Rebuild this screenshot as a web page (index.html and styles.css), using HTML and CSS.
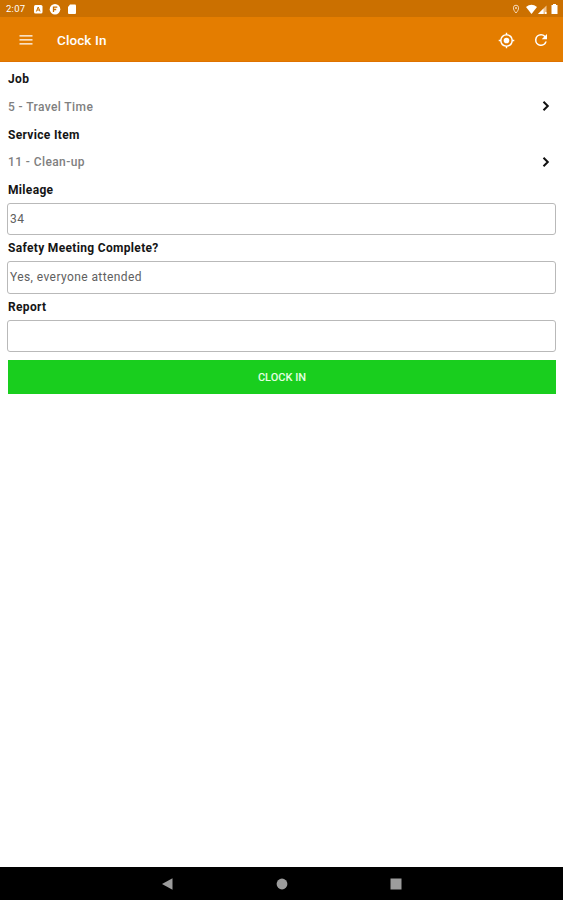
FILE: index.html
```html
<!DOCTYPE html>
<html lang="en">
<head>
<meta charset="utf-8">
<title>Clock In</title>
<link rel="stylesheet" href="styles.css">
</head>
<body>
<div class="status">
  <span class="time">2:07</span>
  <svg class="notices" width="45" height="12" viewBox="0 0 45 12">
    <rect x="1" y="2" width="8.5" height="8.5" rx="1.5" fill="#fff"/>
    <path d="M3.4 8.5 5.2 4l1.9 4.5M4 7h2.5" fill="none" stroke="#cb7000"/>
    <circle cx="22" cy="6.2" r="5.3" fill="#fff"/>
    <path d="M20.5 9V4.2h3.8M20.5 6.5h2.7" fill="none" stroke="#cb7000" stroke-width="1.3"/>
    <path d="M38 1.5h5q1 0 1 1V10q0 1-1 1h-6q-1 0-1-1V4z" fill="#fff" transform="translate(-1 0)"/>
  </svg>
  <svg class="signals" width="49" height="12" viewBox="0 0 49 12">
    <path d="M6 10C4.200 8.100 3.400 6.300 3.400 4.800a2.600 2.600 0 0 1 5.200 0c0 1.500-.8 3.300-2.600 5.200z" fill="none" stroke="#f6d9b8"/>
    <circle cx="6" cy="4.900" r="1" fill="#f6d9b8"/>
    <path d="M16 4Q21.500-.5 27 4L21.500 11z" fill="#fff"/>
    <path d="M28 11 36.500 2.500V11z" fill="#f0c28c"/>
    <path d="M28 11l5.500-5.500V11zM35 9h1.500v2H35z" fill="#fff"/>
    <path d="M43 1h3v1h1.500v9h-6V2H43z" fill="#fff"/>
  </svg>
</div>
<header class="bar">
  <svg class="menu" width="14" height="12" viewBox="0 0 14 12"><path d="M.5 1.900h13M.5 5.900h13M.5 9.900h13" stroke="#fff" stroke-width="1.400"/></svg>
  <h1>Clock In</h1>
  <svg class="locate" width="17" height="17" viewBox="0 0 24 24" fill="#fff"><path d="M12 8a4 4 0 1 0 0 8 4 4 0 0 0 0-8zm8.940 3A8.990 8.990 0 0 0 13 3.060V1h-2v2.060A8.990 8.990 0 0 0 3.060 11H1v2h2.060A8.990 8.990 0 0 0 11 20.940V23h2v-2.060A8.990 8.990 0 0 0 20.940 13H23v-2h-2.060zM12 19a7 7 0 1 1 0-14 7 7 0 0 1 0 14z"/></svg>
  <svg class="refresh" width="18" height="18" viewBox="0 0 24 24" fill="#fff"><path d="M17.650 6.350A7.960 7.960 0 0 0 12 4a8 8 0 1 0 7.730 10h-2.080A6 6 0 1 1 12 6c1.660 0 3.140.69 4.220 1.780L13 11h7V4z"/></svg>
</header>
<main>
  <div class="label job">Job</div>
  <div class="pick"><span>5 - Travel Time</span><svg width="8" height="12" viewBox="0 0 8 12"><path d="m1.500 1.700 4.300 4.300-4.300 4.300" fill="none" stroke="#111" stroke-width="2"/></svg></div>
  <div class="label service">Service Item</div>
  <div class="pick"><span>11 - Clean-up</span><svg width="8" height="12" viewBox="0 0 8 12"><path d="m1.500 1.700 4.300 4.300-4.300 4.300" fill="none" stroke="#111" stroke-width="2"/></svg></div>
  <div class="label mileage">Mileage</div>
  <div class="field">34</div>
  <div class="label">Safety Meeting Complete?</div>
  <div class="field">Yes, everyone attended</div>
  <div class="label">Report</div>
  <div class="field"></div>
  <div class="button">CLOCK IN</div>
</main>
<nav>
  <svg width="12" height="12" viewBox="0 0 12 12"><path d="M0 6 10.500.300v11.400z" fill="#9c9c9c"/></svg>
  <svg width="12" height="12" viewBox="0 0 12 12"><circle cx="6" cy="6" r="5.400" fill="#9c9c9c"/></svg>
  <svg width="12" height="12" viewBox="0 0 12 12"><path d="M.5.5h11v11H.5z" fill="#9c9c9c"/></svg>
</nav>
</body>
</html>
```
FILE: styles.css
```css
* { box-sizing: border-box; }
body {
  margin: 0;
  height: 900px;
  display: flex;
  flex-direction: column;
  background: #fff;
  font-family: Roboto, "Liberation Sans", sans-serif;
  font-size: 12px;
}
svg { display: block; flex: none; }
.status {
  height: 17px;
  display: flex;
  align-items: center;
  padding: 0 4px 0 6px;
  background: #cb7000;
  color: #fff;
}
.time { width: 27px; font-size: 9.5px; letter-spacing: .25px; }
.signals { margin-left: auto; }
.bar {
  height: 45px;
  display: flex;
  align-items: center;
  padding: 2px 13px 0 19px;
  background: #e47d00;
  border-bottom: 1px solid #df7200;
  color: #fff;
}
h1 {
  margin: 0 auto 0 24px;
  font-size: 13.5px;
  font-weight: 500;
  letter-spacing: .1px;
}
.locate { margin-right: 17px; }
main { flex: 1; padding: 3px 7px 0; }
.label {
  height: 26px;
  line-height: 27px;
  padding-left: 1px;
  font-weight: 700;
  letter-spacing: .33px;
  color: #151515;
}
.job { height: 28px; line-height: 29px; }
.service { height: 28px; line-height: 29px; }
.mileage { height: 27px; line-height: 29px; }
.pick {
  height: 27.5px;
  display: flex;
  align-items: center;
  justify-content: space-between;
  padding: 0 6px 0 1px;
  font-weight: 500;
  letter-spacing: .4px;
  color: #808080;
}
.pick svg { margin-bottom: 1px; }
.field {
  height: 32.3px;
  line-height: 31px;
  border: 1px solid #b9b9b9;
  border-radius: 3px;
  padding-left: 2px;
  letter-spacing: .41px;
  color: #606060;
}
.button {
  height: 34px;
  line-height: 35px;
  margin: 8.5px 0 0 1px;
  background: #19ce1e;
  color: #e4ffe2;
  text-align: center;
  font-size: 11px;
  font-weight: 500;
}
nav {
  height: 33px;
  display: flex;
  justify-content: center;
  align-items: center;
  gap: 102px;
  background: #000;
}
```
